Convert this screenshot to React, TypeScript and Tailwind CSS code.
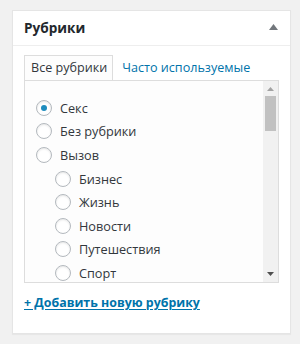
const items = [
  { name: "Секс", level: 0, checked: true },
  { name: "Без рубрики", level: 0 },
  { name: "Вызов", level: 0 },
  { name: "Бизнес", level: 1 },
  { name: "Жизнь", level: 1 },
  { name: "Новости", level: 1 },
  { name: "Путешествия", level: 1 },
  { name: "Спорт", level: 1 },
];

const Radio = ({ checked }: { checked?: boolean }) => (
  <span className="flex items-center justify-center w-4 h-4 rounded-full border border-[#b4b9be] bg-white shadow-[inset_0_1px_2px_rgba(0,0,0,0.1)] shrink-0">
    {checked && <span className="w-[6px] h-[6px] rounded-full bg-[#1e8cbe]" />}
  </span>
);

const App = () => {
  return (
    <div
      className="w-[300px] h-[344px] bg-[#f1f1f1] pt-[10px] pl-[12px]"
      style={{ fontFamily: '"Open Sans", "Noto Sans", sans-serif' }}
    >
      <div className="w-[279px] h-[324px] bg-white border border-[#e5e5e5] shadow-[0_1px_1px_rgba(0,0,0,0.04)]">
        {/* HEADER */}
        <div className="flex items-center justify-between h-[35px] pl-[11px] pr-[12px] border-b border-[#eee]">
          <h2 className="text-[13.6px] font-bold text-[#23282d] mt-[1px]">Рубрики</h2>
          <svg width="9" height="6" viewBox="0 0 9 6" className="mt-[-2px]">
            <path d="M4.5 0 L9 6 L0 6 Z" fill="#72777c" />
          </svg>
        </div>

        {/* BODY */}
        <div className="px-[11px] pt-[10px]">
          {/* TABS */}
          <div className="flex items-end h-[24px] text-[12.6px]">
            <div className="h-[25px] pl-[6px] pr-[5px] pt-[1px] flex items-center border border-b-0 border-[#ddd] bg-[#fdfdfd] text-[#32373c] relative z-10">
              Все рубрики
            </div>
            <a className="ml-[9px] h-[24px] pt-[1px] flex items-center text-[#0073aa]">Часто используемые</a>
          </div>

          {/* LIST BOX */}
          <div className="flex h-[203px] border border-[#ddd] bg-[#fdfdfd]">
            <ul className="flex-1 pt-[15px] pl-[11px] text-[12.7px] text-[#32373c]">
              {items.map((it) => (
                <li
                  key={it.name}
                  className={`flex items-center gap-[8px] h-[23.6px] ${it.level ? "pl-[19px]" : ""}`}
                >
                  <Radio checked={it.checked} />
                  <span className="mt-[1px]">{it.name}</span>
                </li>
              ))}
            </ul>
            {/* scrollbar */}
            <div className="w-[15px] bg-[#f1f1f1] flex flex-col items-center">
              <svg width="7" height="4" viewBox="0 0 7 4" className="mt-[6px]">
                <path d="M3.5 0 L7 4 L0 4 Z" fill="#a3a3a3" />
              </svg>
              <div className="w-[11px] h-[35px] bg-[#c1c1c1] mt-[5px]" />
              <div className="flex-1" />
              <svg width="7" height="4" viewBox="0 0 7 4" className="mb-[6px]">
                <path d="M0 0 L7 0 L3.5 4 Z" fill="#505050" />
              </svg>
            </div>
          </div>

          {/* ADD LINK */}
          <a className="block mt-[11px] text-[12.4px] font-bold text-[#0073aa] underline underline-offset-2">
            + Добавить новую рубрику
          </a>
        </div>
      </div>
    </div>
  );
};

export default App;
